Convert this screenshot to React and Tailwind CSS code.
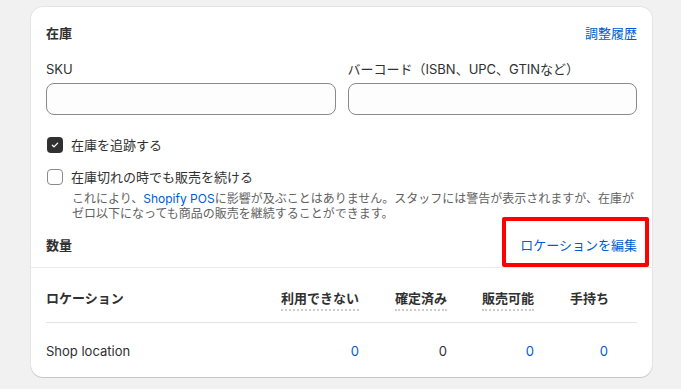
import { useState } from "react";

const columns = [
  { key: "unavailable", label: "利用できない", dotted: true, w: "w-[100px]" },
  { key: "committed", label: "確定済み", dotted: true, w: "w-[88px]" },
  { key: "available", label: "販売可能", dotted: true, w: "w-[87px]" },
  { key: "onHand", label: "手持ち", dotted: false, w: "w-[75px]" },
];

const row = {
  name: "Shop location",
  values: [
    { v: 0, link: true },
    { v: 0, link: false },
    { v: 0, link: true },
    { v: 0, link: true },
  ],
};

function Checkbox({ checked, onChange }) {
  return (
    <button
      onClick={onChange}
      className={`flex h-4 w-4 shrink-0 items-center justify-center rounded-[4px] ${
        checked ? "bg-[#303030]" : "border border-[#8a8a8a] bg-white"
      }`}
    >
      {checked && (
        <svg viewBox="0 0 16 16" className="h-3 w-3">
          <path d="M4.5 8.3l2.2 2.2 4.8-5" fill="none" stroke="white" strokeWidth="1.8" strokeLinecap="round" strokeLinejoin="round" />
        </svg>
      )}
    </button>
  );
}

export default function App() {
  const [track, setTrack] = useState(true);
  const [oversell, setOversell] = useState(false);

  return (
    <div className="min-h-[389px] bg-[#f1f1f1] px-[31px] pt-[7px] font-['Inter','Noto_Sans_CJK_JP',sans-serif] text-[13px] text-[#303030]">
      <div className="relative w-[621px] rounded-xl bg-white shadow-[0_1px_0_0_rgba(0,0,0,0.13),0_0_0_1px_rgba(0,0,0,0.05)]">
        <div className="px-[15px] pt-4">
          <div className="flex items-center justify-between leading-5">
            <h2 className="font-semibold">在庫</h2>
            <a className="text-[#005bd3]">調整履歴</a>
          </div>

          <div className="mt-4 grid grid-cols-2 gap-3">
            <label className="flex flex-col gap-1">
              <span className="leading-5">SKU</span>
              <input className="h-8 rounded-lg border border-[#8a8a8a] bg-[#fdfdfd] px-3 outline-none" />
            </label>
            <label className="flex flex-col gap-1">
              <span className="leading-5">バーコード（ISBN、UPC、GTINなど）</span>
              <input className="h-8 rounded-lg border border-[#8a8a8a] bg-[#fdfdfd] px-3 outline-none" />
            </label>
          </div>

          <div className="mt-5 flex items-center gap-2 pl-px leading-5">
            <Checkbox checked={track} onChange={() => setTrack(!track)} />
            <span>在庫を追跡する</span>
          </div>

          <div className="mt-3 flex items-center gap-2 pl-px leading-5">
            <Checkbox checked={oversell} onChange={() => setOversell(!oversell)} />
            <span>在庫切れの時でも販売を続ける</span>
          </div>
          <p className="mt-1 pl-[26px] text-[12px] leading-[15px] text-[#616161]">
            これにより、<a className="text-[#005bd3]">Shopify POS</a>に影響が及ぶことはありません。スタッフには警告が表示されますが、在庫がゼロ以下になっても商品の販売を継続することができます。
          </p>

          <div className="mt-[14px] flex items-center justify-between pb-3 leading-5">
            <h3 className="font-semibold">数量</h3>
            <a className="text-[#005bd3]">ロケーションを編集</a>
          </div>
        </div>

        <div className="border-t border-[#ebebeb] px-[15px] pb-[16px]">
          <div className="flex items-end border-b border-[#e3e3e3] pt-5 pb-[11px] font-semibold leading-5">
            <div className="flex-1 self-start">ロケーション</div>
            {columns.map((c) => (
              <div key={c.key} className={`${c.w} flex justify-end`}>
                <span className={c.dotted ? "border-b-2 border-dotted border-[#cccccc] pb-[1px]" : "pb-[3px]"}>{c.label}</span>
              </div>
            ))}
            <div className="w-[28px]" />
          </div>
          <div className="flex items-center pt-[18px] leading-5">
            <div className="flex-1">{row.name}</div>
            {row.values.map((val, i) => (
              <div key={i} className={`${columns[i].w} text-right ${val.link ? "text-[#005bd3]" : ""}`}>
                {i === 3 ? <span className="pr-[1px]">{val.v}</span> : val.v}
              </div>
            ))}
            <div className="w-[28px]" />
          </div>
        </div>

        <div className="pointer-events-none absolute left-[471px] top-[210px] h-[50px] w-[147px] rounded-[2px] border-4 border-[#ff0000]" />
      </div>
    </div>
  );
}
